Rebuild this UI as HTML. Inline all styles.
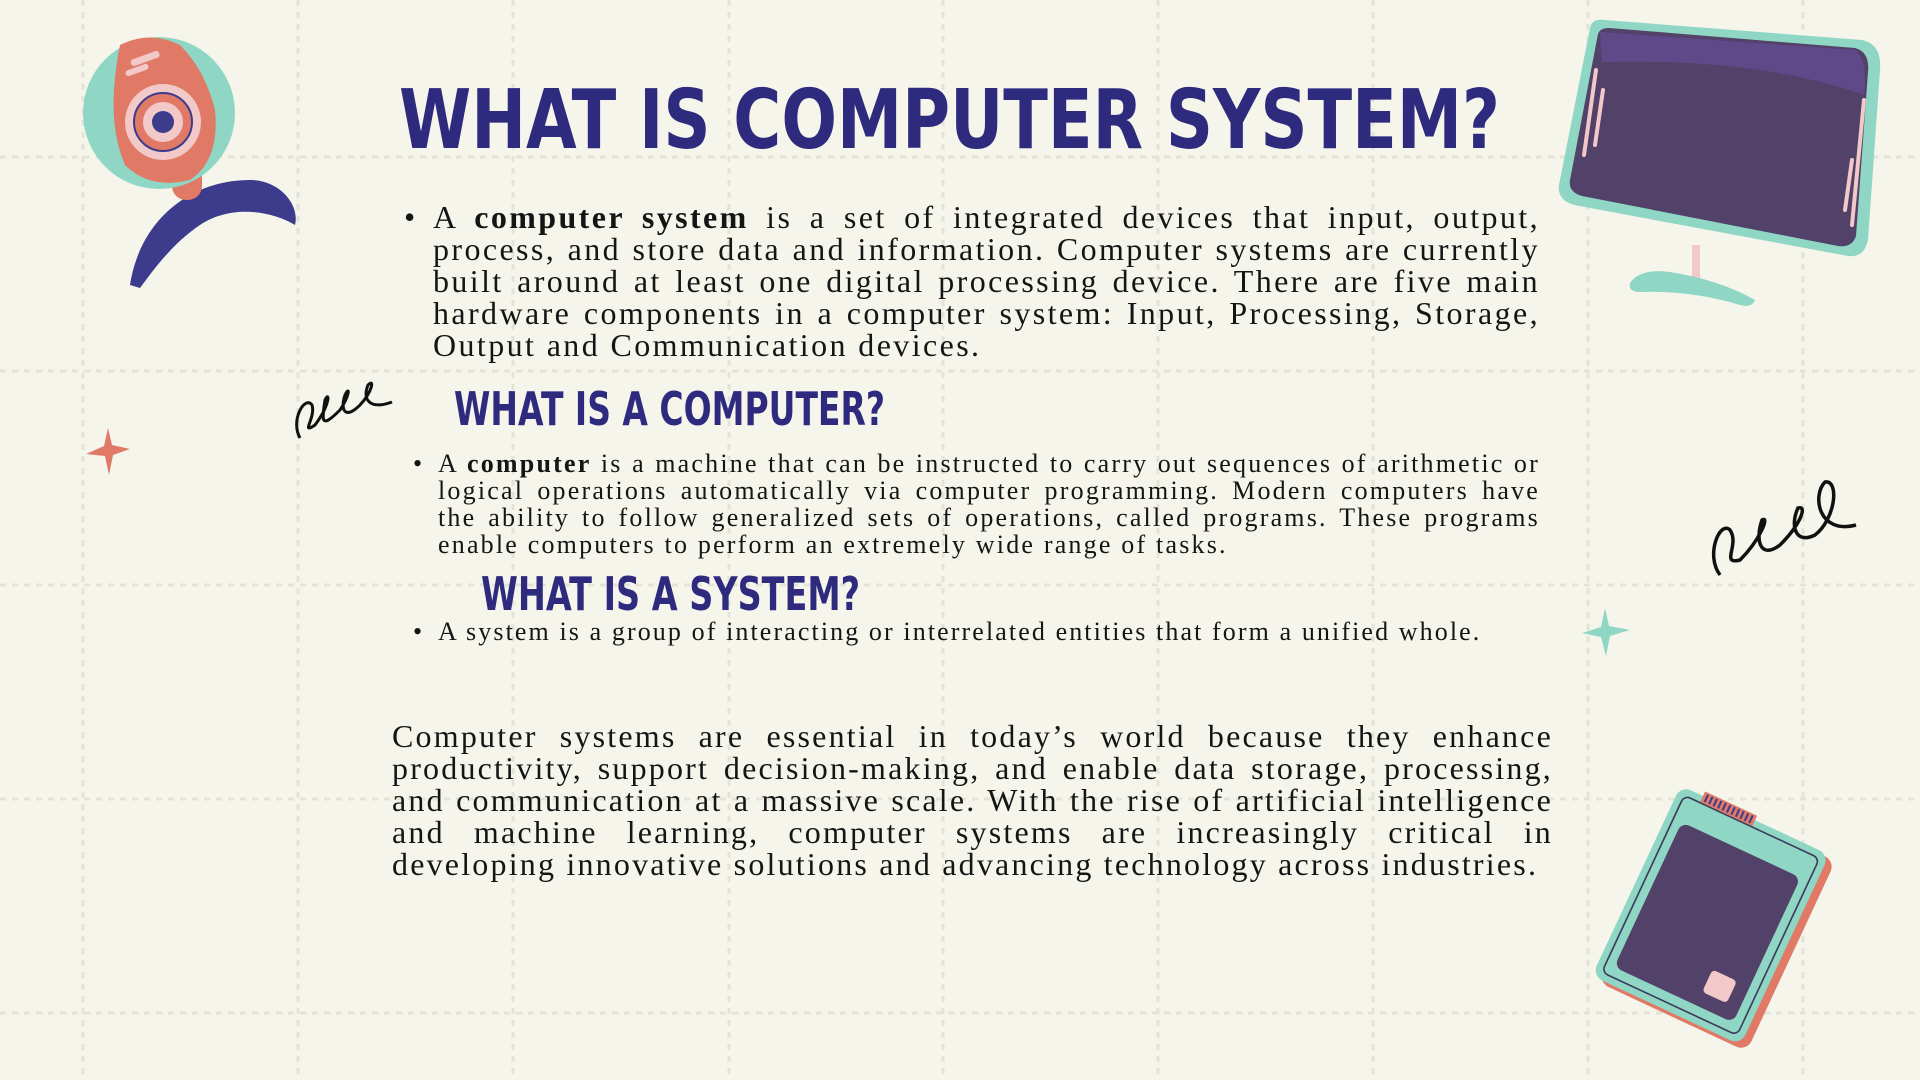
<!DOCTYPE html>
<html><head><meta charset="utf-8"><style>
html,body{margin:0;padding:0}
body{width:1920px;height:1080px;overflow:hidden;background:#f6f5ec;position:relative;font-family:"Liberation Serif",serif;color:#151515}
svg.bg{position:absolute;left:0;top:0}
.p{position:absolute;}
.p div{text-align:justify;text-align-last:justify;white-space:nowrap;overflow:visible}
.p div.l{text-align-last:left}
.bul{position:absolute}
</style></head><body>
<svg class="bg" width="1920" height="1080" viewBox="0 0 1920 1080">
<g stroke="#e4e3d8" stroke-width="3" stroke-dasharray="6 6" fill="none">
<line x1="0" y1="157" x2="1920" y2="157"/><line x1="0" y1="371" x2="1920" y2="371"/><line x1="0" y1="585" x2="1920" y2="585"/><line x1="0" y1="799" x2="1920" y2="799"/><line x1="0" y1="1013" x2="1920" y2="1013"/>
<line x1="83" y1="0" x2="83" y2="1080"/><line x1="298" y1="0" x2="298" y2="1080"/><line x1="513" y1="0" x2="513" y2="1080"/><line x1="729" y1="0" x2="729" y2="1080"/><line x1="943" y1="0" x2="943" y2="1080"/><line x1="1158" y1="0" x2="1158" y2="1080"/><line x1="1373" y1="0" x2="1373" y2="1080"/><line x1="1588" y1="0" x2="1588" y2="1080"/><line x1="1803" y1="0" x2="1803" y2="1080"/>
</g>
<path d="M130 285 C140 220 190 180 250 180 C280 180 300 205 295 225 C270 210 230 205 200 225 C170 245 150 275 140 288 Z" fill="#3d3b8c"/>
<rect x="172" y="160" width="30" height="40" rx="14" fill="#e07a66"/>
<circle cx="159" cy="113" r="76" fill="#8fd6c4"/>
<path d="M120 45 Q150 30 180 45 Q205 70 215 110 Q220 160 190 180 Q150 190 125 165 Q105 120 120 45 Z" fill="#e07a66"/>
<circle cx="163" cy="122" r="38" fill="#f2c8c8"/>
<circle cx="163" cy="122" r="29" fill="#e07a66" stroke="#3d3b8c" stroke-width="2"/>
<circle cx="163" cy="122" r="20" fill="#f2c8c8"/>
<circle cx="163" cy="122" r="11" fill="#3d3b8c"/>
<rect x="130" y="55" width="30" height="7" rx="3" fill="#f2c8c8" transform="rotate(-20 145 58)"/>
<rect x="125" y="67" width="24" height="6" rx="3" fill="#f2c8c8" transform="rotate(-20 137 70)"/>
<path d="M108 428 L112 445 L130 449 L113 455 L109 475 L105 456 L86 454 L104 446 Z" fill="#e07a66"/>
<path d="M1605 608 L1609 626 L1630 630 L1610 636 L1606 656 L1601 637 L1582 633 L1601 627 Z" fill="#8fd6c4"/>
<path d="M300 438 C290 420 305 395 312 405 C316 418 300 435 315 425 C330 405 330 390 325 400 C322 420 320 430 340 410 C350 395 350 385 345 395 C340 410 345 420 360 405 C372 392 375 378 368 385 C362 400 370 410 392 402" fill="none" stroke="#111" stroke-width="3"/>
<path d="M1720 575 C1705 555 1720 520 1730 530 C1740 545 1720 565 1740 560 C1760 540 1770 515 1762 520 C1755 540 1760 560 1780 545 C1800 525 1808 505 1798 508 C1790 525 1795 545 1815 535 C1835 520 1840 480 1825 482 C1812 495 1818 535 1856 525" fill="none" stroke="#111" stroke-width="3.5"/>
<rect x="1692" y="245" width="8" height="40" fill="#f2c8c8"/>
<path d="M1630 283 Q1640 268 1670 272 Q1720 280 1755 300 Q1752 308 1740 305 Q1690 290 1640 292 Q1628 292 1630 283 Z" fill="#8fd6c4"/>
<path d="M1590 28 Q1592 18 1605 20 L1862 40 Q1882 44 1880 70 L1868 240 Q1864 258 1848 256 L1574 205 Q1557 200 1559 185 Z" fill="#8fd6c4"/>
<path d="M1598 34 Q1600 28 1609 28 L1855 48 Q1870 52 1868 72 L1856 236 Q1852 248 1838 246 L1582 196 Q1568 192 1570 180 Z" fill="#524168"/>
<path d="M1600 32 L1855 50 Q1868 60 1864 95 Q1760 58 1602 62 Z" fill="#6a4ea0" opacity=".6"/>
<g stroke="#f2c8c8" stroke-width="4" stroke-linecap="round"><line x1="1596" y1="70" x2="1584" y2="155"/><line x1="1603" y1="90" x2="1595" y2="145"/><line x1="1864" y1="100" x2="1852" y2="225"/><line x1="1852" y1="160" x2="1845" y2="210"/></g>
<g transform="translate(1713 920) rotate(25) scale(0.82)">
<rect x="-95" y="-128" width="200" height="256" rx="14" fill="#e07a66"/>
<rect x="-105" y="-132" width="200" height="256" rx="14" fill="#8fd6c4"/>
<rect x="-96" y="-123" width="182" height="238" rx="8" fill="none" stroke="#3d3b5c" stroke-width="2"/>
<rect x="-85" y="-92" width="160" height="195" rx="10" fill="#524168"/>
<rect x="25" y="55" width="33" height="30" rx="5" fill="#f2c8c8"/>
<rect x="-75" y="-138" width="70" height="14" fill="#e07a66"/>
<g stroke="#3d3b8c" stroke-width="2.5"><path d="M-70 -136v10M-64 -136v10M-58 -136v10M-52 -136v10M-46 -136v10M-40 -136v10M-34 -136v10M-28 -136v10M-22 -136v10M-16 -136v10M-10 -136v10"/></g>
</g>
<g font-family="DejaVu Sans, sans-serif" font-weight="bold" fill="#2e2a7e">
<text x="399" y="148" font-size="82" textLength="1101" lengthAdjust="spacingAndGlyphs">WHAT IS COMPUTER SYSTEM?</text>
<text x="454" y="425" font-size="46" textLength="431" lengthAdjust="spacingAndGlyphs">WHAT IS A COMPUTER?</text>
<text x="481" y="610" font-size="46" textLength="379" lengthAdjust="spacingAndGlyphs">WHAT IS A SYSTEM?</text>
</g>
</svg>
<div class="bul" style="left:404px;top:201px;font-size:32px;line-height:32px">•</div>
<div class="p" style="left:433px;top:201px;width:1107px;font-size:32px;line-height:32px;letter-spacing:2.4px">
<div>A <b>computer system</b> is a set of integrated devices that input, output,</div>
<div>process, and store data and information. Computer systems are currently</div>
<div>built around at least one digital processing device. There are five main</div>
<div>hardware components in a computer system: Input, Processing, Storage,</div>
<div class="l">Output and Communication devices.</div>
</div>
<div class="bul" style="left:413px;top:450px;font-size:26px;line-height:27px">•</div>
<div class="p" style="left:438px;top:450px;width:1102px;font-size:26px;line-height:27px;letter-spacing:2.2px">
<div>A <b>computer</b> is a machine that can be instructed to carry out sequences of arithmetic or</div>
<div>logical operations automatically via computer programming. Modern computers have</div>
<div>the ability to follow generalized sets of operations, called programs. These programs</div>
<div class="l">enable computers to perform an extremely wide range of tasks.</div>
</div>
<div class="bul" style="left:413px;top:618px;font-size:26px;line-height:27px">•</div>
<div class="p" style="left:438px;top:618px;width:1045px;font-size:26px;line-height:27px;letter-spacing:2.1px">
<div class="l">A system is a group of interacting or interrelated entities that form a unified whole.</div>
</div>
<div class="p" style="left:392px;top:720px;width:1161px;font-size:32px;line-height:32px;letter-spacing:2.2px">
<div>Computer systems are essential in today’s world because they enhance</div>
<div>productivity, support decision-making, and enable data storage, processing,</div>
<div>and communication at a massive scale. With the rise of artificial intelligence</div>
<div>and machine learning, computer systems are increasingly critical in</div>
<div class="l">developing innovative solutions and advancing technology across industries.</div>
</div>
</body></html>
